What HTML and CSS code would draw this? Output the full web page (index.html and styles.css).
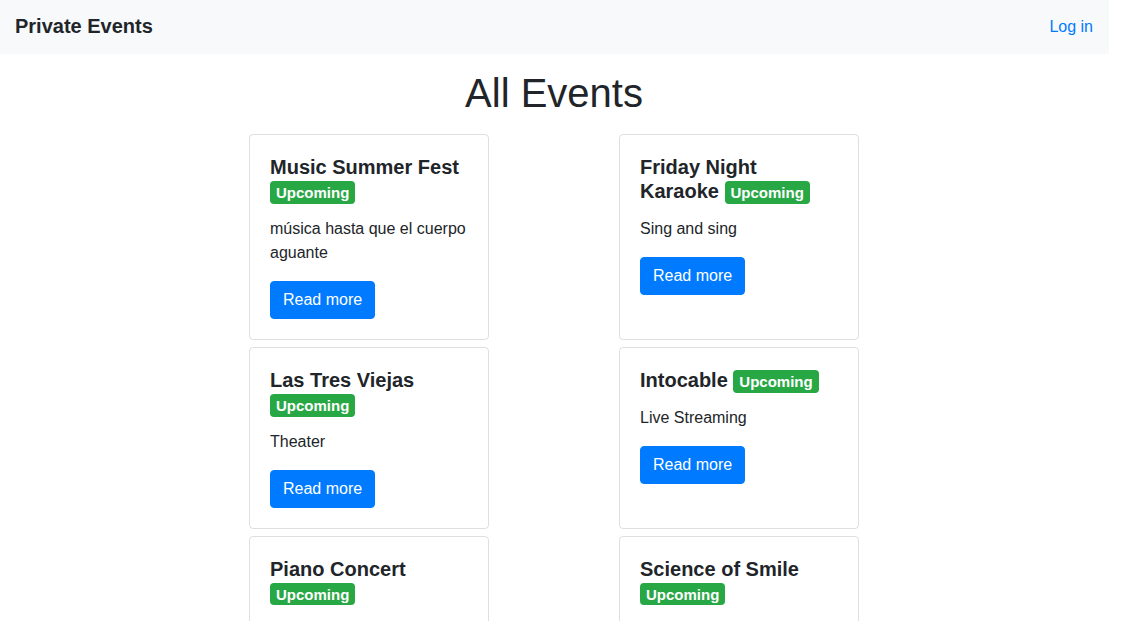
FILE: index.html
```html
<!DOCTYPE html>
<html lang="en">
<head>
<meta charset="utf-8">
<title>Private Events</title>
<link rel="stylesheet" href="styles.css">
</head>
<body>
<div class="page">
  <nav class="navbar">
    <a class="brand" href="#">Private Events</a>
    <a class="nav-link" href="#">Log in</a>
  </nav>
  <main class="main">
    <h1 class="page-title">All Events</h1>
    <div class="events">
      <div class="card">
        <h5 class="card-title">Music Summer Fest <span class="badge">Upcoming</span></h5>
        <p class="card-text">música hasta que el cuerpo aguante</p>
        <a class="btn" href="#">Read more</a>
      </div>
      <div class="card">
        <h5 class="card-title">Friday Night Karaoke <span class="badge">Upcoming</span></h5>
        <p class="card-text">Sing and sing</p>
        <a class="btn" href="#">Read more</a>
      </div>
      <div class="card">
        <h5 class="card-title">Las Tres Viejas <span class="badge">Upcoming</span></h5>
        <p class="card-text">Theater</p>
        <a class="btn" href="#">Read more</a>
      </div>
      <div class="card">
        <h5 class="card-title">Intocable <span class="badge">Upcoming</span></h5>
        <p class="card-text">Live Streaming</p>
        <a class="btn" href="#">Read more</a>
      </div>
      <div class="card">
        <h5 class="card-title">Piano Concert <span class="badge">Upcoming</span></h5>
        <p class="card-text">Classical music night</p>
        <a class="btn" href="#">Read more</a>
      </div>
      <div class="card">
        <h5 class="card-title">Science of Smile <span class="badge">Upcoming</span></h5>
        <p class="card-text">Talk</p>
        <a class="btn" href="#">Read more</a>
      </div>
    </div>
  </main>
</div>
</body>
</html>
```

FILE: styles.css
```css
html {
  overflow: hidden;
}

body {
  margin: 0;
  font-family: "Liberation Sans", Arial, sans-serif;
  font-size: 16px;
  line-height: 1.5;
  color: #212529;
  background: #fff;
}

.page {
  width: 1109px;
}

a {
  text-decoration: none;
}

.navbar {
  display: flex;
  justify-content: space-between;
  align-items: center;
  box-sizing: border-box;
  height: 54px;
  padding: 0 16px 0 15px;
  line-height: 24px;
  background: #f8f9fa;
}

.brand {
  padding-bottom: 2px;
  font-size: 20px;
  font-weight: 700;
  color: #212529;
}

.nav-link {
  font-size: 16px;
  color: #007bff;
}

.main {
  display: flex;
  flex-direction: column;
  align-items: center;
  padding-right: 1px;
}

.page-title {
  margin: 15px 0 17px;
  font-size: 40px;
  font-weight: 400;
  line-height: 48px;
}

.events {
  display: grid;
  grid-template-columns: 240px 240px;
  column-gap: 130px;
  row-gap: 7px;
}

.card {
  border: 1px solid rgba(0, 0, 0, 0.125);
  border-radius: 4px;
  padding: 20px;
  display: flex;
  flex-direction: column;
  align-items: flex-start;
}

.card-title {
  margin: 0 0 13px;
  font-size: 20px;
  font-weight: 700;
  line-height: 1.2;
}

.badge {
  display: inline-block;
  padding: 3.75px 6px;
  font-size: 15px;
  font-weight: 700;
  line-height: 1;
  color: #fff;
  background: #28a745;
  border-radius: 4px;
  vertical-align: baseline;
}

.card-text {
  margin: 0 0 16px;
}

.btn {
  display: inline-block;
  padding: 6px 12px;
  border: 1px solid #007bff;
  border-radius: 4px;
  background: #007bff;
  color: #fff;
  font-size: 16px;
  line-height: 24px;
}
```
